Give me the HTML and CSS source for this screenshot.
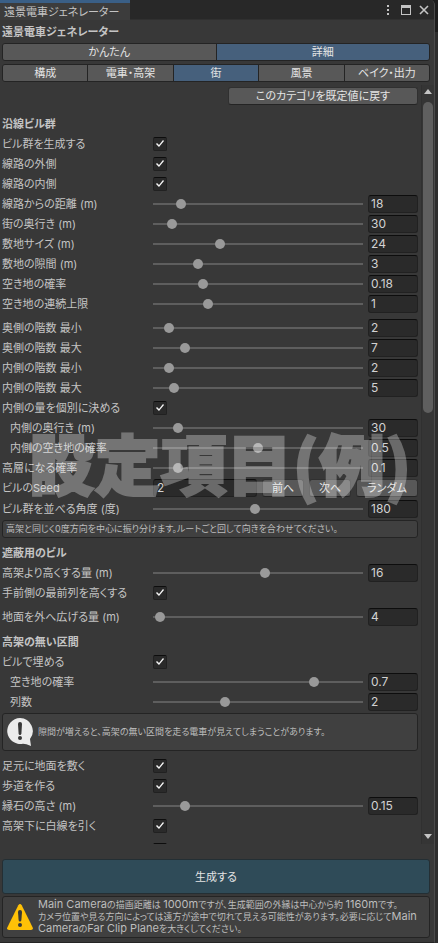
FILE: index.html
```html
<!DOCTYPE html>
<html lang="ja">
<head>
  <meta charset="UTF-8">
  <meta name="viewport" content="width=device-width, initial-scale=1.0">
  <title>遠景電車ジェネレーター</title>
  <link rel="stylesheet" href="styles.css">
</head>
<body>
  <div class="window">
    <header class="tabbar">
      <div class="tab">遠景電車ジェネレーター</div>
      <div class="window-buttons">
        <button type="button" aria-label="メニュー">
          <svg width="4" height="12" viewBox="0 0 4 12"><path d="M1 1h2v2H1zM1 5h2v2H1zM1 9h2v2H1z" fill="#c4c4c4"/></svg>
        </button>
        <button type="button" aria-label="最大化">
          <svg width="10" height="10" viewBox="0 0 10 10"><path d="M0 0h10v10H0zM1 3v6h8V3z" fill="#c4c4c4" fill-rule="evenodd"/></svg>
        </button>
        <button type="button" aria-label="閉じる">
          <svg width="10" height="10" viewBox="0 0 10 10"><path d="M1 1l8 8M9 1l-8 8" stroke="#c4c4c4" stroke-width="1.6"/></svg>
        </button>
      </div>
    </header>

    <h1>遠景電車ジェネレーター</h1>

    <nav class="toolbar">
      <button type="button">かんたん</button>
      <button type="button" class="active">詳細</button>
    </nav>
    <nav class="toolbar">
      <button type="button">構成</button>
      <button type="button">電車・高架</button>
      <button type="button" class="active">街</button>
      <button type="button">風景</button>
      <button type="button">ベイク・出力</button>
    </nav>

    <div class="scroll-view">
      <main class="settings">
        <button type="button" class="button reset">このカテゴリを既定値に戻す</button>

        <section>
          <h2>沿線ビル群</h2>
          <div class="row"><label for="generate">ビル群を生成する</label><input type="checkbox" id="generate" checked></div>
          <div class="row"><label for="outside">線路の外側</label><input type="checkbox" id="outside" checked></div>
          <div class="row"><label for="inside">線路の内側</label><input type="checkbox" id="inside" checked></div>
          <div class="row"><label for="distance">線路からの距離 (m)</label><input type="range" min="10" max="80" value="18" aria-label="線路からの距離"><input type="text" id="distance" value="18"></div>
          <div class="row"><label for="depth">街の奥行き (m)</label><input type="range" min="20" max="160" value="30" aria-label="街の奥行き"><input type="text" id="depth" value="30"></div>
          <div class="row"><label for="lot">敷地サイズ (m)</label><input type="range" min="8" max="60" value="24" aria-label="敷地サイズ"><input type="text" id="lot" value="24"></div>
          <div class="row"><label for="lotGap">敷地の隙間 (m)</label><input type="range" min="0" max="15" value="3" aria-label="敷地の隙間"><input type="text" id="lotGap" value="3"></div>
          <div class="row"><label for="vacant">空き地の確率</label><input type="range" min="0" max="0.8" step="0.01" value="0.18" aria-label="空き地の確率"><input type="text" id="vacant" value="0.18"></div>
          <div class="row"><label for="vacantRun">空き地の連続上限</label><input type="range" min="0" max="4" value="1" aria-label="空き地の連続上限"><input type="text" id="vacantRun" value="1"></div>

          <div class="row spaced"><label for="outerMin">奥側の階数 最小</label><input type="range" min="1" max="20" value="2" aria-label="奥側の階数 最小"><input type="text" id="outerMin" value="2"></div>
          <div class="row"><label for="outerMax">奥側の階数 最大</label><input type="range" min="1" max="46" value="7" aria-label="奥側の階数 最大"><input type="text" id="outerMax" value="7"></div>
          <div class="row"><label for="innerMin">内側の階数 最小</label><input type="range" min="1" max="20" value="2" aria-label="内側の階数 最小"><input type="text" id="innerMin" value="2"></div>
          <div class="row"><label for="innerMax">内側の階数 最大</label><input type="range" min="1" max="50" value="5" aria-label="内側の階数 最大"><input type="text" id="innerMax" value="5"></div>
          <div class="row"><label for="innerCustom">内側の量を個別に決める</label><input type="checkbox" id="innerCustom" checked></div>
          <div class="row indent"><label for="innerDepth">内側の奥行き (m)</label><input type="range" min="20" max="120" value="30" aria-label="内側の奥行き"><input type="text" id="innerDepth" value="30"></div>
          <div class="overlay-anchor">
            <div class="row indent"><label for="innerVacant">内側の空き地の確率</label><input type="range" min="0" max="1" step="0.01" value="0.5" aria-label="内側の空き地の確率"><input type="text" id="innerVacant" value="0.5"></div>
            <div class="row"><label for="highRise">高層になる確率</label><input type="range" min="0" max="1" step="0.01" value="0.1" aria-label="高層になる確率"><input type="text" id="highRise" value="0.1"></div>
            <div class="row seed">
              <label for="seed">ビルの<span class="latin">Seed</span></label>
              <input type="text" id="seed" value="2">
              <button type="button" class="button">前へ</button>
              <button type="button" class="button">次へ</button>
              <button type="button" class="button wide">ランダム</button>
            </div>
            <div class="caption">設定項目(例)</div>
          </div>
          <div class="row"><label for="angle">ビル群を並べる角度 (度)</label><input type="range" min="30" max="340" value="180" aria-label="ビル群を並べる角度"><input type="text" id="angle" value="180"></div>
          <p class="help">高架と同じく0度方向を中心に振り分けます。ルートごと回して向きを合わせてください。</p>
        </section>

        <section>
          <h2>遮蔽用のビル</h2>
          <div class="row"><label for="above">高架より高くする量 (m)</label><input type="range" min="0" max="30" value="16" aria-label="高架より高くする量"><input type="text" id="above" value="16"></div>
          <div class="row"><label for="frontRow">手前側の最前列を高くする</label><input type="checkbox" id="frontRow" checked></div>
          <div class="row spaced"><label for="groundOut">地面を外へ広げる量 (m)</label><input type="range" min="2" max="200" value="4" aria-label="地面を外へ広げる量"><input type="text" id="groundOut" value="4"></div>
        </section>

        <section>
          <h2>高架の無い区間</h2>
          <div class="row"><label for="fill">ビルで埋める</label><input type="checkbox" id="fill" checked></div>
          <div class="row indent"><label for="fillVacant">空き地の確率</label><input type="range" min="0" max="0.9" step="0.01" value="0.7" aria-label="空き地の確率"><input type="text" id="fillVacant" value="0.7"></div>
          <div class="row indent"><label for="columns">列数</label><input type="range" min="1" max="4" value="2" aria-label="列数"><input type="text" id="columns" value="2"></div>
          <div class="help with-icon">
            <svg width="28" height="30" viewBox="0 0 28 30">
              <path d="M14 1a13 13 0 1 0 3 25.700q3 0 8 2.300l-1-7A13 13 0 0 0 14 1z" fill="#ececec"/>
              <path d="M12 7q0-2 2-2t2 2l-.6 9.500q-.2 1.500-1.400 1.500t-1.400-1.500z" fill="#383838"/>
              <circle cx="14" cy="21" r="2" fill="#383838"/>
            </svg>
            <p>隙間が増えると、高架の無い区間を走る電車が見えてしまうことがあります。</p>
          </div>
        </section>

        <section>
          <div class="row spaced"><label for="ground">足元に地面を敷く</label><input type="checkbox" id="ground" checked></div>
          <div class="row"><label for="sidewalk">歩道を作る</label><input type="checkbox" id="sidewalk" checked></div>
          <div class="row"><label for="curb">縁石の高さ (m)</label><input type="range" min="0.05" max="0.8" step="0.01" value="0.15" aria-label="縁石の高さ"><input type="text" id="curb" value="0.15"></div>
          <div class="row"><label for="whiteLine">高架下に白線を引く</label><input type="checkbox" id="whiteLine" checked></div>
          <div class="row spaced"><label for="more"></label><input type="checkbox" id="more" checked></div>
        </section>
      </main>

      <div class="scrollbar">
        <svg width="8" height="5" viewBox="0 0 8 5"><path d="M4 0l4 5H0z" fill="#c4c4c4"/></svg>
        <div class="track"><div class="thumb"></div></div>
        <svg width="8" height="5" viewBox="0 0 8 5"><path d="M0 0h8L4 5z" fill="#c4c4c4"/></svg>
      </div>
    </div>

    <footer>
      <button type="button" class="generate">生成する</button>
      <div class="help with-icon">
        <svg width="28" height="28" viewBox="0 0 28 28">
          <path d="M12.300 2.200q1.700-2.400 3.400 0L26.700 24.500q.8 2.500-1.700 2.500H3q-2.500 0-1.700-2.500z" fill="#ffc107"/>
          <path d="M12 9q0-2 2-2t2 2l-.6 8q-.2 1.500-1.400 1.500T12.600 17z" fill="#383838"/>
          <circle cx="14" cy="22" r="2" fill="#383838"/>
        </svg>
        <p><span class="latin">Main Camera</span>の描画距離は <span class="latin">1000m</span>ですが、生成範囲の外縁は中心から約 <span class="latin">1160m</span>です。<br>カメラ位置や見る方向によっては遠方が途中で切れて見える可能性があります。必要に応じて<span class="latin">Main<br>Camera</span>の<span class="latin">Far Clip Plane</span>を大きくしてください。</p>
      </div>
    </footer>
  </div>
</body>
</html>
```
FILE: styles.css
```css
* {
  box-sizing: border-box;
}
body {
  margin: 0;
  padding-right: 3px;
  background: linear-gradient(#1c1c1c 32px, #2d2d2d 32px);
  color: #c4c4c4;
  font-family: Inter, "Noto Sans CJK JP", sans-serif;
  font-size: 11px;
  font-feature-settings: "palt";
  line-height: 18px;
  overflow: hidden;
}
button, input {
  font: inherit;
  font-feature-settings: inherit;
  color: inherit;
  margin: 0;
  padding: 0;
}
h1, h2, p {
  margin: 0;
}
h1, h2 {
  font-size: 11px;
  line-height: 18px;
}

.window {
  display: flex;
  flex-direction: column;
  height: 100vh;
  background-color: #383838;
  border-right: 1px solid #4a4a4a;
  border-bottom: 1px solid #242424;
  border-radius: 0 5px 0 0;
  overflow: hidden;
}
.tabbar {
  display: flex;
  justify-content: space-between;
  height: 20px;
  flex: none;
  background-color: #282828;
  border-bottom: 1px solid #303030;
}
.tab {
  width: 130px;
  height: 20px;
  padding-left: 4px;
  background-color: #3c3c3c;
  border-top: 3px solid #3a5f86;
  line-height: 18px;
}
.window-buttons {
  display: flex;
  align-items: center;
  gap: 8px;
  padding-right: 5px;
}
.window-buttons button {
  display: flex;
  background: none;
  border: none;
}
.window-buttons button:first-child {
  margin-right: 3px;
}
h1 {
  padding: 3px 2px 0;
  margin-bottom: 2px;
}

.toolbar {
  display: flex;
  flex: none;
  margin: 0 4px 3px 2px;
  border: 1px solid #242424;
  border-radius: 3px;
  height: 18px;
  overflow: hidden;
}
.toolbar button {
  flex: 1 1 0;
  background-color: #585858;
  border: none;
  border-right: 1px solid #242424;
  color: #e4e4e4;
  line-height: 16px;
}
.toolbar button:last-child {
  border-right: none;
}
.toolbar button.active {
  background-color: #46607c;
}

.scroll-view {
  display: flex;
  flex: 1;
  min-height: 0;
  overflow: hidden;
}
.settings {
  flex: 1;
  display: flex;
  flex-direction: column;
  padding: 2px 3px 0 2px;
}
.settings > * {
  flex: none;
}
.button {
  height: 18px;
  background-color: #585858;
  border: 1px solid #303030;
  border-bottom-color: #242424;
  border-radius: 3px;
  color: #e4e4e4;
  line-height: 16px;
}
.reset {
  width: 190px;
  align-self: flex-end;
  margin-bottom: 5px;
}
h2 {
  padding-top: 5px;
  margin-bottom: 2px;
}
.row {
  display: flex;
  align-items: center;
  height: 18px;
  margin-bottom: 2px;
}
.row.spaced {
  margin-top: 6px;
}
.row label {
  width: 151px;
  flex: none;
  white-space: nowrap;
}
.row.indent label {
  padding-left: 8px;
}

input[type="text"] {
  width: 50px;
  height: 18px;
  padding: 0 2px;
  background-color: #2a2a2a;
  border: 1px solid #212121;
  border-top-color: #0d0d0d;
  border-radius: 3px;
  color: #d2d2d2;
  font-size: 12px;
}
input[type="checkbox"] {
  appearance: none;
  width: 14px;
  height: 14px;
  background-color: #2a2a2a;
  border: 1px solid #212121;
  border-top-color: #0d0d0d;
  border-radius: 2px;
}
input[type="checkbox"]:checked::before {
  content: "";
  display: block;
  width: 12px;
  height: 12px;
  background-color: #f4f4f4;
  clip-path: polygon(2px 6px, 3px 5px, 5px 7px, 9px 2px, 10px 3px, 5px 9px);
}
input[type="range"] {
  appearance: none;
  flex: 1;
  min-width: 0;
  height: 10px;
  margin-right: 5px;
  background: linear-gradient(#5e5e5e, #5e5e5e) center / 100% 2px no-repeat;
}
input[type="range"]::-webkit-slider-thumb {
  appearance: none;
  width: 10px;
  height: 10px;
  border-radius: 50%;
  background-color: #999;
}

.overlay-anchor {
  position: relative;
}
.seed {
  gap: 5px;
  margin-bottom: 3px;
}
.seed label {
  width: 146px;
}
.seed input[type="text"] {
  flex: 1;
  min-width: 0;
  padding-left: 3px;
}
.seed .button {
  width: 42px;
}
.seed .wide {
  width: 62px;
}
.caption {
  position: absolute;
  inset: -14px 0 0 20px;
  display: flex;
  align-items: center;
  justify-content: center;
  color: #fff;
  opacity: 0.3;
  font-family: "Noto Sans CJK JP", sans-serif;
  font-size: 66px;
  font-weight: 900;
  font-feature-settings: normal;
  -webkit-text-stroke: 2px #fff;
  paint-order: stroke fill;
  white-space: nowrap;
  pointer-events: none;
}

.help {
  padding: 2px 3px;
  background-color: #404040;
  border: 1px solid #242424;
  border-radius: 3px;
  font-size: 9px;
  line-height: 12px;
  color: #bdbdbd;
}
.settings p.help {
  height: 18px;
  margin-bottom: 1px;
}
.help.with-icon {
  display: flex;
  align-items: center;
  gap: 4px;
  min-height: 38px;
}
footer .help.with-icon {
  min-height: 42px;
}
.help svg {
  flex: none;
}
.latin {
  font-size: 11px;
  line-height: 1px;
}

.scrollbar {
  display: flex;
  flex-direction: column;
  align-items: center;
  gap: 8px;
  width: 13px;
  padding: 4px 0 5px;
  background-color: #353535;
  border-left: 1px solid #303030;
}
.scrollbar svg {
  flex: none;
}
.track {
  flex: 1;
  width: 10px;
}
.thumb {
  height: 43%;
  border-radius: 5px;
  background-color: #5f5f5f;
}

footer {
  display: flex;
  flex-direction: column;
  flex: none;
  gap: 2px;
  padding: 15px 4px 4px 2px;
}
.generate {
  height: 35px;
  background-color: #2f4b58;
  border: 1px solid #242f34;
  border-radius: 3px;
  color: #e4e4e4;
}
```
